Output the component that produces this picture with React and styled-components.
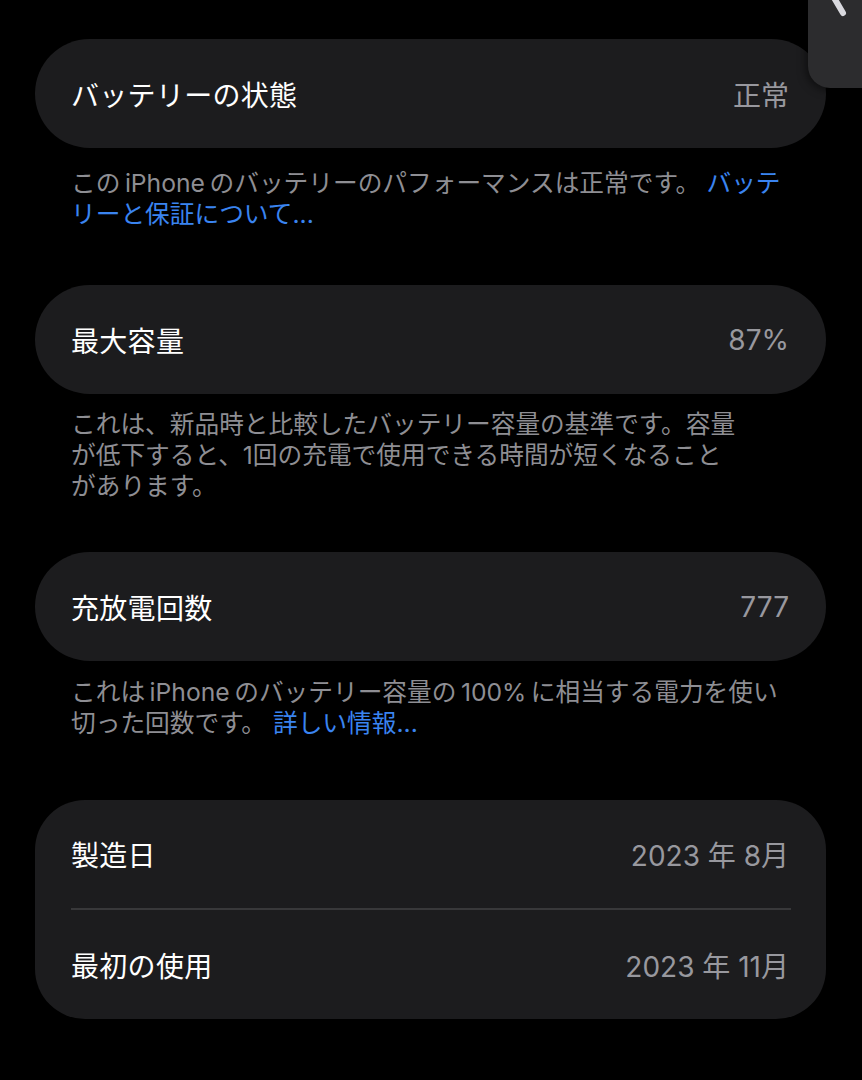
import React from 'react'
import styled, { createGlobalStyle } from 'styled-components'

const GlobalStyle = createGlobalStyle`
  html, body {
    margin: 0;
    padding: 0;
    background: #000;
  }
  body {
    font-family: Inter, "Noto Sans CJK JP", sans-serif;
    -webkit-font-smoothing: antialiased;
  }
`

const Page = styled.div`
  position: relative;
  width: 862px;
  height: 1080px;
  overflow: hidden;
  background: #000;
  padding: 39px 0 0 35px;
  box-sizing: border-box;
`

const Section = styled.section`
  width: 791px;
  margin-bottom: ${props => props.gap || 56}px;
`

const Card = styled.div`
  background: #1c1c1e;
  border-radius: ${props => props.radius || 55}px;
  display: flex;
  flex-direction: column;
`

const Row = styled.div`
  height: ${props => props.height || 109}px;
  display: flex;
  align-items: center;
  justify-content: space-between;
  padding: 0 37px 0 36px;
  box-sizing: border-box;
`

const Label = styled.span`
  color: #fff;
  font-size: 28px;
  letter-spacing: 0.3px;
`

const Value = styled.span`
  color: #98989e;
  font-size: 28px;
`

const Divider = styled.div`
  height: 2px;
  background: #38383a;
  margin: 0 35px 0 36px;
`

const Footer = styled.p`
  margin: 0;
  padding: ${props => props.top || 17}px 36px 0 36px;
  color: #8e8e93;
  font-size: 24.7px;
  line-height: 31px;
  white-space: nowrap;
`

const More = styled.span`
  color: #3a84f0;
`

const Tab = styled.div`
  position: absolute;
  top: 0;
  right: 0;
  width: 54px;
  height: 88px;
  background: #2c2c2e;
  border-bottom-left-radius: 22px;
  box-shadow: -2px 2px 8px rgba(0, 0, 0, 0.5);
`

const TabMark = styled.svg`
  display: block;
  position: absolute;
  top: 0;
  left: 0;
`

const App = () => {
  return (
    <>
      <GlobalStyle />
      <Page>
        <Section gap={55}>
          <Card>
            <Row>
              <Label>バッテリーの状態</Label>
              <Value>正常</Value>
            </Row>
          </Card>
          <Footer top={20}>
            この{'\u2009'}iPhone{'\u2009'}のバッテリーのパフォーマンスは正常です。{'\u2005'}<More>バッテ</More>
            <br />
            <More>リーと保証について...</More>
          </Footer>
        </Section>

        <Section gap={50}>
          <Card>
            <Row>
              <Label>最大容量</Label>
              <Value>87%</Value>
            </Row>
          </Card>
          <Footer top={15}>
            これは、新品時と比較したバッテリー容量の基準です。容量
            <br />
            が低下すると、1回の充電で使用できる時間が短くなること
            <br />
            があります。
          </Footer>
        </Section>

        <Section gap={61}>
          <Card>
            <Row>
              <Label>充放電回数</Label>
              <Value>777</Value>
            </Row>
          </Card>
          <Footer top={16}>
            これは{'\u2009'}iPhone{'\u2009'}のバッテリー容量の{'\u2009'}100%{'\u2009'}に相当する電力を使い
            <br />
            切った回数です。 <More>詳しい情報...</More>
          </Footer>
        </Section>

        <Section>
          <Card radius={50}>
            <Row height={108}>
              <Label>製造日</Label>
              <Value>2023 年 8月</Value>
            </Row>
            <Divider />
            <Row height={109}>
              <Label>最初の使用</Label>
              <Value>2023 年 11月</Value>
            </Row>
          </Card>
        </Section>

        <Tab>
          <TabMark width="54" height="30" viewBox="0 0 54 30">
            <path d="M25 -4 L35 13" stroke="#d9d9de" strokeWidth="6" strokeLinecap="round" fill="none" />
          </TabMark>
        </Tab>
      </Page>
    </>
  )
}

export default App
